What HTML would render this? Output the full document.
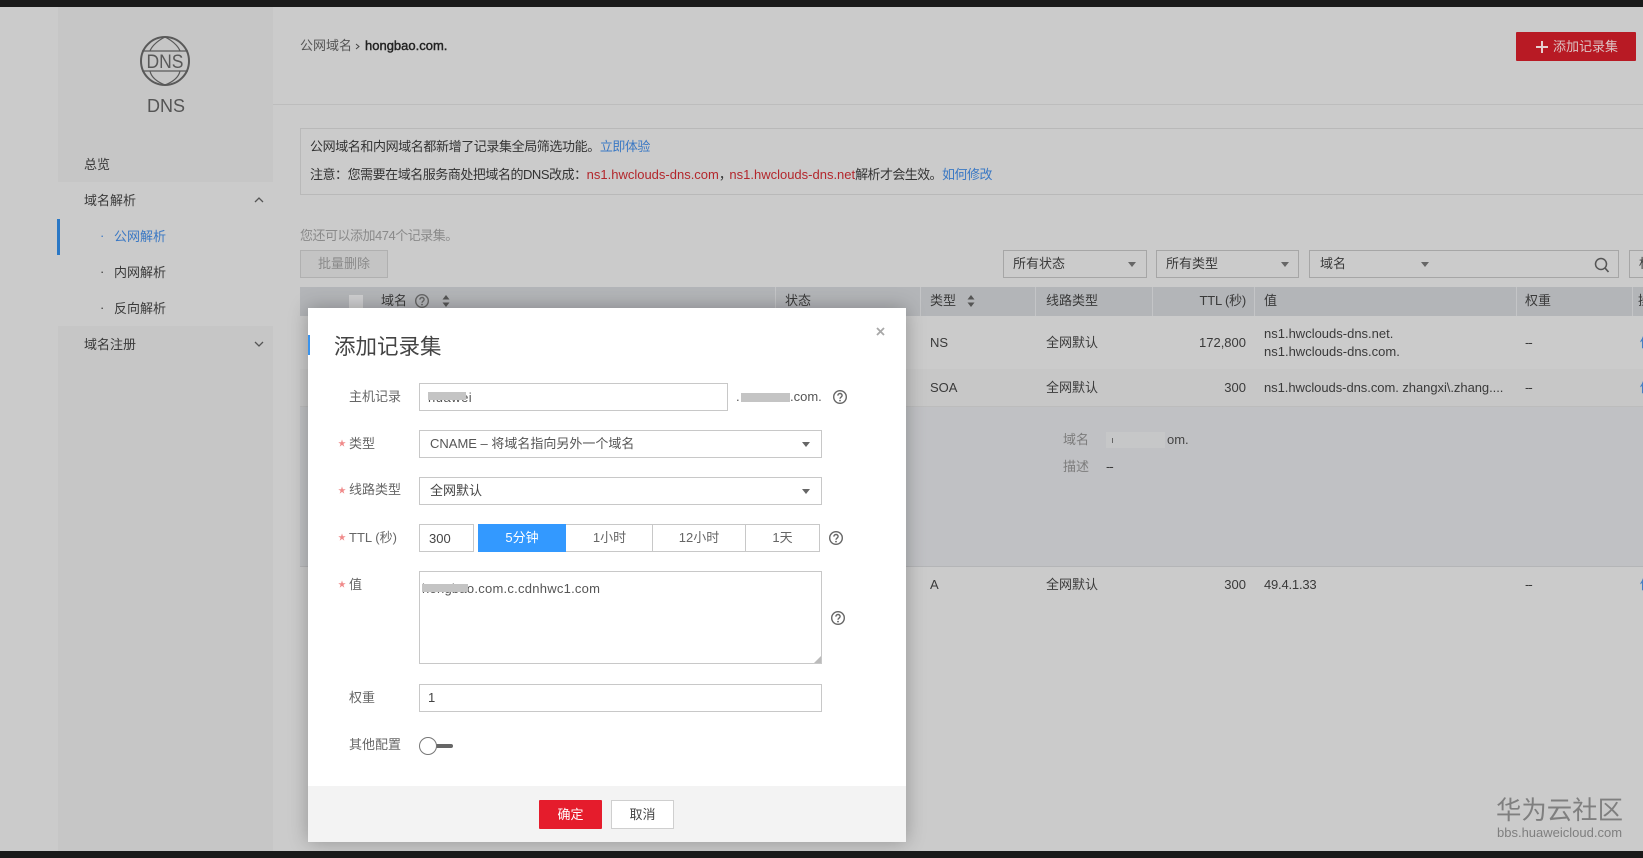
<!DOCTYPE html>
<html lang="zh">
<head>
<meta charset="utf-8">
<title>DNS</title>
<style>
html,body{margin:0;padding:0;width:1643px;height:858px;overflow:hidden;background:#cbcbcb}
body{position:relative;font-family:"Liberation Sans","Noto Sans CJK SC",sans-serif;font-size:13px;color:#3a3a3a}
.a{position:absolute;box-sizing:border-box}
.t{position:absolute;white-space:nowrap;line-height:20px;height:20px}
.r{text-align:right}
.red{color:#b3272c;letter-spacing:0}.blue{color:#3a78c4}
.inp{position:absolute;box-sizing:border-box;background:#fff;border:1px solid #c8c8c8}
.sel{position:absolute;box-sizing:border-box;border:1px solid #a6a6a6;background:#cbcbcb;height:28px}
.arr{position:absolute;width:0;height:0;border-left:4px solid transparent;border-right:4px solid transparent;border-top:5px solid #666}
.star{position:absolute;color:#f08a8a;font-size:8px;line-height:20px}
.sep{position:absolute;top:287px;width:1px;height:29px;background:#c4c5c7}
.d{letter-spacing:-1px}
svg{position:absolute;overflow:visible}
</style>
</head>
<body>
<svg width="0" height="0" style="position:absolute"><defs>
<symbol id="q" viewBox="0 0 14 14"><circle cx="7" cy="7" r="6.3" fill="none" stroke="#666" stroke-width="1.4"/><path d="M4.9 5.6C4.9 4.3 5.9 3.5 7 3.5S9.1 4.3 9.1 5.5C9.1 7 7 7.1 7 8.8" fill="none" stroke="#666" stroke-width="1.4"/><circle cx="7" cy="10.6" r=".9" fill="#666"/></symbol>
</defs></svg>

<!-- top / bottom bars -->
<div class="a" style="left:0;top:0;width:1643px;height:7px;background:#1a1a1a"></div>
<div class="a" style="left:0;top:851px;width:1643px;height:7px;background:#1a1a1a;z-index:5"></div>

<!-- sidebar -->
<div class="a" style="left:58px;top:7px;width:215px;height:175px;background:#c6c6c6"></div>
<div class="a" style="left:58px;top:326px;width:215px;height:525px;background:#c6c6c6"></div>
<div class="a" style="left:57px;top:219px;width:3px;height:36px;background:#2b78c5"></div>
<svg style="left:140px;top:36px" width="50" height="50" viewBox="0 0 50 50">
<circle cx="25" cy="25" r="24" fill="none" stroke="#595959" stroke-width="2"/>
<path d="M25 1C15 6 11 12 10 15M25 1C35 6 39 12 40 15M10 35C11 40 15 45 25 49C35 45 39 40 40 35" fill="none" stroke="#595959" stroke-width="1.2"/>
<path d="M2 15H48M2 35H48" stroke="#595959" stroke-width="1.2"/>
<text x="25" y="32" text-anchor="middle" font-family="Liberation Sans" font-size="19" fill="#595959" textLength="37" lengthAdjust="spacingAndGlyphs">DNS</text>
</svg>
<div class="t" style="left:147px;top:96px;width:36px;text-align:center;font-size:18px;color:#555">DNS</div>
<div class="t" style="left:84px;top:155px">总览</div>
<div class="t" style="left:84px;top:191px">域名解析</div>
<svg style="left:254px;top:197px" width="10" height="6"><path d="M1 5L5 1L9 5" fill="none" stroke="#555" stroke-width="1.3"/></svg>
<div class="t" style="left:100px;top:226px;color:#3a78c4">·</div>
<div class="t blue" style="left:114px;top:227px">公网解析</div>
<div class="t" style="left:100px;top:262px">·</div>
<div class="t" style="left:114px;top:263px">内网解析</div>
<div class="t" style="left:100px;top:298px">·</div>
<div class="t" style="left:114px;top:299px">反向解析</div>
<div class="t" style="left:84px;top:335px">域名注册</div>
<svg style="left:254px;top:341px" width="10" height="6"><path d="M1 1L5 5L9 1" fill="none" stroke="#555" stroke-width="1.3"/></svg>

<!-- header -->
<div class="a" style="left:273px;top:104px;width:1370px;height:1px;background:#bdbdbd"></div>
<div class="t" style="left:300px;top:36px;color:#555">公网域名</div>
<svg style="left:355px;top:43px" width="5" height="7"><path d="M1 1L4 3.5L1 6" fill="none" stroke="#444" stroke-width="1"/></svg>
<div class="t" style="left:365px;top:36px;color:#222;-webkit-text-stroke:.4px #222">hongbao.com.</div>
<div class="a" style="left:1516px;top:32px;width:120px;height:29px;background:#b81a24;border-radius:1px"></div>
<svg style="left:1536px;top:41px" width="12" height="12"><path d="M6 0V12M0 6H12" stroke="#e6d0d0" stroke-width="2"/></svg>
<div class="t" style="left:1553px;top:37px;color:#dcc4c4">添加记录集</div>

<!-- notice -->
<div class="a" style="left:300px;top:128px;width:1343px;height:67px;border:1px solid #b9b9b9;border-right:none"></div>
<div class="t" style="left:310px;top:137px;color:#333;letter-spacing:-.4px">公网域名和内网域名都新增了记录集全局筛选功能。<span class="blue" style="letter-spacing:-.5px">立即体验</span></div>
<div class="t" style="left:310px;top:165px;color:#333;letter-spacing:-.47px">注意：您需要在域名服务商处把域名的DNS改成：<span class="red">ns1.hwclouds-dns.com</span><span style="letter-spacing:-2.5px">，</span><span class="red">ns1.hwclouds-dns.net</span><span style="letter-spacing:-.6px">解析才会生效。</span><span class="blue" style="letter-spacing:-.5px">如何修改</span></div>

<div class="t" style="left:300px;top:226px;color:#8a8a8a;letter-spacing:-.5px">您还可以添加474个记录集。</div>
<div class="a" style="left:300px;top:250px;width:88px;height:28px;border:1px solid #b0b0b0;background:#c4c4c4"></div>
<div class="t" style="left:318px;top:254px;color:#8a8a8a">批量删除</div>

<!-- filters -->
<div class="sel" style="left:1003px;top:250px;width:144px"></div>
<div class="t" style="left:1013px;top:254px">所有状态</div><div class="arr" style="left:1128px;top:262px"></div>
<div class="sel" style="left:1156px;top:250px;width:143px"></div>
<div class="t" style="left:1166px;top:254px">所有类型</div><div class="arr" style="left:1281px;top:262px"></div>
<div class="sel" style="left:1309px;top:250px;width:310px"></div>
<div class="t" style="left:1320px;top:254px">域名</div><div class="arr" style="left:1421px;top:262px"></div>
<svg style="left:1594px;top:257px" width="16" height="16"><circle cx="7" cy="7" r="5.5" fill="none" stroke="#555" stroke-width="1.5"/><path d="M11 11L14.5 15" stroke="#555" stroke-width="1.7"/></svg>
<div class="sel" style="left:1629px;top:250px;width:30px"></div>
<div class="t" style="left:1639px;top:254px">标</div>

<!-- table -->
<div class="a" style="left:300px;top:287px;width:1343px;height:29px;background:#b3b5b8"></div>
<div class="sep" style="left:775px"></div><div class="sep" style="left:920px"></div>
<div class="sep" style="left:1035px"></div><div class="sep" style="left:1152px"></div>
<div class="sep" style="left:1254px"></div><div class="sep" style="left:1516px"></div>
<div class="sep" style="left:1632px"></div>
<div class="a" style="left:349px;top:295px;width:14px;height:14px;background:#cfcfd0"></div>
<div class="t" style="left:381px;top:291px">域名</div>
<svg style="left:415px;top:294px" width="14" height="14"><use href="#q" width="14" height="14"/></svg>
<svg style="left:442px;top:295px" width="8" height="12"><path d="M4 0L7.5 4.5H.5ZM4 12L7.5 7.5H.5Z" fill="#555"/></svg>
<div class="t" style="left:785px;top:291px">状态</div>
<div class="t" style="left:930px;top:291px">类型</div>
<svg style="left:967px;top:295px" width="8" height="12"><path d="M4 0L7.5 4.5H.5ZM4 12L7.5 7.5H.5Z" fill="#555"/></svg>
<div class="t" style="left:1046px;top:291px">线路类型</div>
<div class="t r" style="left:1146px;top:291px;width:100px;letter-spacing:-.2px">TTL (秒)</div>
<div class="t" style="left:1264px;top:291px">值</div>
<div class="t" style="left:1525px;top:291px">权重</div>
<div class="t" style="left:1638px;top:291px">操</div>

<div class="t" style="left:930px;top:333px">NS</div>
<div class="t" style="left:1046px;top:333px">全网默认</div>
<div class="t r" style="left:1146px;top:333px;width:100px">172,800</div>
<div class="t" style="left:1264px;top:324px">ns1.hwclouds-dns.net.</div>
<div class="t" style="left:1264px;top:342px">ns1.hwclouds-dns.com.</div>
<div class="t d" style="left:1525px;top:333px">--</div>
<div class="t blue" style="left:1640px;top:333px">修</div>

<div class="a" style="left:300px;top:369px;width:1343px;height:38px;background:#c7c7c7;border-bottom:1px solid #bcbcbc"></div>
<div class="t" style="left:930px;top:378px">SOA</div>
<div class="t" style="left:1046px;top:378px">全网默认</div>
<div class="t r" style="left:1146px;top:378px;width:100px">300</div>
<div class="t" style="left:1264px;top:378px;width:240px;overflow:hidden;letter-spacing:-.05px">ns1.hwclouds-dns.com. zhangxi\.zhang....</div>
<div class="t d" style="left:1525px;top:378px">--</div>
<div class="t blue" style="left:1640px;top:378px">修</div>

<div class="a" style="left:300px;top:407px;width:1343px;height:160px;background:#c0c1c4;border-bottom:1px solid #b4b5b7"></div>
<div class="t" style="left:1063px;top:430px;color:#7c7c7c">域名</div>
<div class="a" style="left:1106px;top:432px;width:59px;height:16px;background:#c6c7c8"></div>
<div class="a" style="left:1112px;top:438px;width:1px;height:5px;background:#666"></div>
<div class="t" style="left:1167px;top:430px;color:#444">om.</div>
<div class="t" style="left:1063px;top:457px;color:#7c7c7c">描述</div>
<div class="t d" style="left:1106px;top:457px">--</div>

<div class="t" style="left:930px;top:575px">A</div>
<div class="t" style="left:1046px;top:575px">全网默认</div>
<div class="t r" style="left:1146px;top:575px;width:100px">300</div>
<div class="t" style="left:1264px;top:575px;letter-spacing:-.2px">49.4.1.33</div>
<div class="t d" style="left:1525px;top:575px">--</div>
<div class="t blue" style="left:1640px;top:575px">修</div>

<!-- watermark -->
<div class="t" style="left:1496px;top:796px;height:30px;line-height:30px;font-size:25.4px;color:#7f7f7f;z-index:6">华为云社区</div>
<div class="t" style="left:1497px;top:823px;font-size:13px;color:#7f7f7f;z-index:6">bbs.huaweicloud.com</div>

<!-- modal -->
<div class="a" style="left:308px;top:308px;width:598px;height:534px;background:#fff;box-shadow:0 0 18px rgba(0,0,0,.28);z-index:3">
</div>
<div style="position:absolute;left:0;top:0;z-index:4">
<div class="a" style="left:308px;top:786px;width:598px;height:56px;background:#f3f3f3"></div>
<div class="a" style="left:308px;top:335px;width:2px;height:20px;background:#3a94ee"></div>
<div class="t" style="left:334px;top:332px;height:30px;line-height:30px;font-size:21.5px;color:#444">添加记录集</div>
<svg style="left:876px;top:327px" width="9" height="9"><path d="M1 1L8 8M8 1L1 8" stroke="#a8a8a8" stroke-width="1.8"/></svg>

<div class="t" style="left:349px;top:387px;color:#666">主机记录</div>
<div class="inp" style="left:419px;top:383px;width:309px;height:28px"></div>
<div class="t" style="left:428px;top:388px;color:#555;letter-spacing:.5px">huawei</div>
<div class="a" style="left:428px;top:392px;width:38px;height:8px;background:#c4c4c4"></div>
<div class="t" style="left:736px;top:387px;color:#555">.</div>
<div class="a" style="left:741px;top:393px;width:49px;height:9px;background:#c4c4c4"></div>
<div class="t" style="left:790px;top:387px;color:#555">.com.</div>
<svg style="left:833px;top:390px" width="14" height="14"><use href="#q" width="14" height="14"/></svg>

<div class="star" style="left:338px;top:434px">★</div>
<div class="t" style="left:349px;top:434px;color:#666">类型</div>
<div class="inp" style="left:419px;top:430px;width:403px;height:28px"></div>
<div class="t" style="left:430px;top:434px;color:#555">CNAME – 将域名指向另外一个域名</div>
<div class="arr" style="left:802px;top:442px"></div>

<div class="star" style="left:338px;top:481px">★</div>
<div class="t" style="left:349px;top:480px;color:#666">线路类型</div>
<div class="inp" style="left:419px;top:477px;width:403px;height:28px"></div>
<div class="t" style="left:430px;top:481px;color:#444">全网默认</div>
<div class="arr" style="left:802px;top:489px"></div>

<div class="star" style="left:338px;top:528px">★</div>
<div class="t" style="left:349px;top:528px;color:#666">TTL (秒)</div>
<div class="inp" style="left:419px;top:524px;width:55px;height:28px"></div>
<div class="t" style="left:429px;top:529px;color:#444">300</div>
<div class="a" style="left:478px;top:524px;width:88px;height:28px;background:#3399ff"></div>
<div class="t" style="left:478px;top:528px;width:88px;text-align:center;color:#fff">5分钟</div>
<div class="inp" style="left:566px;top:524px;width:87px;height:28px;border-left:none"></div>
<div class="t" style="left:566px;top:528px;width:87px;text-align:center;color:#666">1小时</div>
<div class="inp" style="left:652px;top:524px;width:94px;height:28px"></div>
<div class="t" style="left:652px;top:528px;width:94px;text-align:center;color:#666">12小时</div>
<div class="inp" style="left:745px;top:524px;width:75px;height:28px"></div>
<div class="t" style="left:745px;top:528px;width:75px;text-align:center;color:#666">1天</div>
<svg style="left:829px;top:531px" width="14" height="14"><use href="#q" width="14" height="14"/></svg>

<div class="star" style="left:338px;top:575px">★</div>
<div class="t" style="left:349px;top:575px;color:#666">值</div>
<div class="inp" style="left:419px;top:571px;width:403px;height:93px"></div>
<svg style="left:814px;top:656px" width="7" height="7"><path d="M7 0V7H0Z" fill="#bbb"/></svg>
<div class="t" style="left:422px;top:579px;color:#555;letter-spacing:.25px">hongbao.com.c.cdnhwc1.com</div>
<div class="a" style="left:422px;top:584px;width:46px;height:8px;background:#c4c4c4"></div>
<svg style="left:831px;top:611px" width="14" height="14"><use href="#q" width="14" height="14"/></svg>

<div class="t" style="left:349px;top:688px;color:#666">权重</div>
<div class="inp" style="left:419px;top:684px;width:403px;height:28px"></div>
<div class="t" style="left:428px;top:688px;color:#444">1</div>

<div class="t" style="left:349px;top:735px;color:#666">其他配置</div>
<div class="a" style="left:435px;top:744px;width:18px;height:4px;background:#666;border-radius:2px"></div>
<div class="a" style="left:419px;top:737px;width:18px;height:18px;border:1px solid #777;border-radius:50%;background:#fff"></div>

<div class="a" style="left:539px;top:800px;width:63px;height:29px;background:#e51c2c;border-radius:1px"></div>
<div class="t" style="left:539px;top:805px;width:63px;text-align:center;color:#fff">确定</div>
<div class="a" style="left:611px;top:800px;width:63px;height:29px;background:#fff;border:1px solid #cfcfcf"></div>
<div class="t" style="left:611px;top:805px;width:63px;text-align:center;color:#444">取消</div>
</div>
</body>
</html>
